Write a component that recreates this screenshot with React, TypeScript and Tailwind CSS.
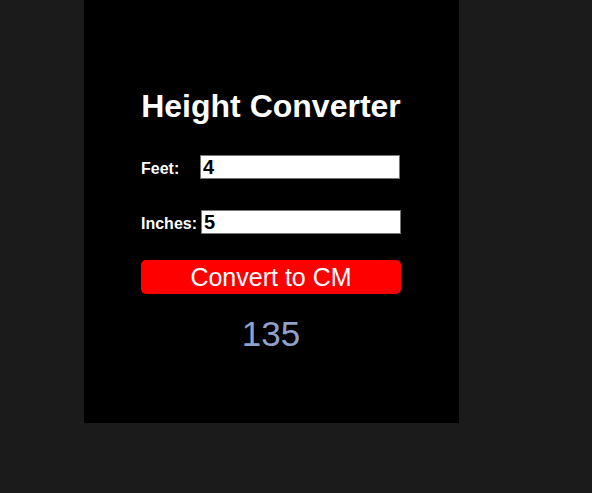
import React, { useState } from 'react';

const App: React.FC = () => {
  const [feet, setFeet] = useState('4');
  const [inches, setInches] = useState('5');
  const [result, setResult] = useState<number | null>(135);

  const convert = () => {
    const total = (Number(feet) || 0) * 12 + (Number(inches) || 0);
    setResult(Math.round(total * 2.54));
  };

  return (
    <div className="min-h-[493px] w-full bg-[#1b1b1b] font-['Liberation_Sans',Arial,sans-serif]">
      <div className="ml-[84px] flex h-[423px] w-[375px] flex-col bg-black">
        <div className="ml-[57px] mt-[90px] flex w-[260px] flex-col">
          {/* Title */}
          <h1 className="text-center text-[32px] font-bold leading-[32px] text-white">Height Converter</h1>

          {/* Feet */}
          <div className="mt-[33px] flex items-baseline">
            <label className="w-[59px] text-[16px] font-bold text-white">Feet:</label>
            <input
              value={feet}
              onChange={(e) => setFeet(e.target.value)}
              className="h-[24px] w-[200px] border border-[#767676] bg-white px-[2px] text-[20px] font-bold text-black outline-none"
            />
          </div>

          {/* Inches */}
          <div className="mt-[29px] flex items-baseline">
            <label className="mr-[4px] text-[16px] font-bold text-white">Inches:</label>
            <input
              value={inches}
              onChange={(e) => setInches(e.target.value)}
              className="h-[24px] w-[200px] border border-[#767676] bg-white px-[2px] text-[20px] font-bold text-black outline-none"
            />
          </div>

          {/* Action */}
          <button
            onClick={convert}
            className="mt-[24px] h-[34px] w-[260px] rounded-[5px] bg-[#ff0000] text-[25px] leading-[34px] text-white"
          >
            Convert to CM
          </button>

          {/* Result */}
          <div className="mt-[22px] text-center text-[35px] leading-[35px] text-[#8ea2cc]">{result}</div>
        </div>
      </div>
    </div>
  );
};

export default App;
